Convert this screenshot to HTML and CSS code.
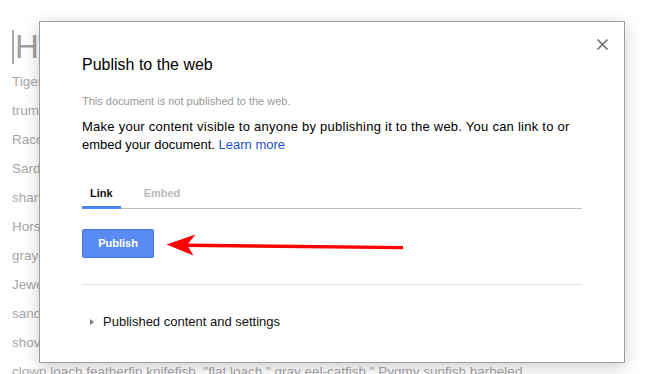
FILE: index.html
```html
<!DOCTYPE html>
<html>
<head>
<meta charset="utf-8">
<link rel="stylesheet" href="styles.css">
</head>
<body>
<div class="doc">
  <div class="doc-title"><span class="cursor"></span>Horse mackerel</div>
  <p>Tiger shark spearfish, horsefish.</p>
  <p>trumpeter cutlassfish pikeperch</p>
  <p>Raccoon butterfly fish yellowtail</p>
  <p>Sardine lightfish tilefish</p>
  <p>shark freshwater eel medaka</p>
  <p>Horsefish Atlantic saury</p>
  <p>gray mullet halibut dory</p>
  <p>Jewel tetra Pacific herring</p>
  <p>sand lance goby dealfish</p>
  <p>shovelnose sturgeon grunion</p>
  <p>clown loach featherfin knifefish, "flat loach," gray eel-catfish," Pygmy sunfish barbeled</p>
</div>

<div class="dialog">
  <button class="close" aria-label="Close">
    <svg width="11" height="11" viewBox="0 0 11 11"><path d="M0.5 0.5 L10.5 10.5 M10.5 0.5 L0.5 10.5" stroke="#767676" stroke-width="1.6" fill="none"/></svg>
  </button>
  <h1 class="title">Publish to the web</h1>
  <div class="status">This document is not published to the web.</div>
  <div class="desc"><span class="wide">Make your content visible to anyone by publishing it to the web. You can link to or</span> embed your document. <a class="link">Learn more</a></div>
  <div class="tabs">
    <div class="tab active">Link</div>
    <div class="tab">Embed</div>
  </div>
  <div class="actions"><button class="publish">Publish</button></div>
  <div class="sep"></div>
  <div class="section"><span class="tri"></span>Published content and settings</div>
</div>

<svg class="arrow" width="654" height="374" viewBox="0 0 654 374">
  <path d="M186 245.2 L403 247.6" stroke="#f00" stroke-width="3.4" fill="none"/>
  <path d="M166.5 244.5 L195.5 234.5 L187 245 L193.5 255.5 Z" fill="#f00"/>
</svg>
</body>
</html>
```

FILE: styles.css
```css
html, body {
  margin: 0;
  padding: 0;
  background: #fff;
  overflow: hidden;
}
body {
  width: 654px;
  height: 374px;
  position: relative;
  font-family: "Liberation Sans", Arial, sans-serif;
}
.doc {
  padding: 29px 0 0 12px;
  color: #a6a6a6;
  white-space: nowrap;
}
.doc-title {
  font-size: 33px;
  line-height: 36px;
  height: 36px;
  margin-bottom: 2px;
  padding-top: 0;
  color: #a0a0a0;
}
.cursor {
  display: inline-block;
  width: 2px;
  height: 34px;
  background: #a8a8a8;
  vertical-align: -6px;
  margin-right: 1px;
}
.doc p {
  margin: 0;
  font-size: 13.5px;
  line-height: 29px;
}
.dialog {
  position: absolute;
  left: 39px;
  top: 21px;
  width: 500px;
  height: 307px;
  border: 1px solid #9c9c9c;
  background: #fff;
  box-shadow: 0 4px 16px rgba(0, 0, 0, 0.2);
  padding: 33px 42px 0;
  box-sizing: content-box;
}
.close {
  position: absolute;
  right: 16px;
  top: 17px;
  width: 11px;
  height: 11px;
  padding: 0;
  border: 0;
  background: none;
  display: block;
}
.close svg { display: block; }
.title {
  margin: 0;
  font-size: 16px;
  line-height: 20px;
  font-weight: normal;
  color: #000;
}
.status {
  margin-top: 19px;
  font-size: 11px;
  line-height: 14px;
  color: #999;
}
.desc {
  margin-top: 10px;
  font-size: 13px;
  line-height: 18px;
  color: #000;
}
.wide {
  letter-spacing: 0.25px;
}
.link {
  color: #2551d1;
  text-decoration: none;
}
.tabs {
  display: flex;
  margin-top: 32px;
  border-bottom: 1px solid #c0c0c0;
}
.tab {
  padding: 0 8px 6px;
  font-size: 11px;
  line-height: 14px;
  font-weight: bold;
  color: #b8b8b8;
  border-bottom: 3px solid transparent;
  margin-bottom: -1px;
  margin-right: 15px;
}
.tab.active {
  color: #111;
  border-bottom-color: #4d86f0;
}
.actions {
  margin-top: 20px;
}
.publish {
  display: block;
  width: 72px;
  height: 29px;
  box-sizing: border-box;
  padding: 0;
  border: 1px solid #4678e0;
  border-radius: 2px;
  background: #5a8bf2;
  color: #fff;
  font-family: "Liberation Sans", Arial, sans-serif;
  font-size: 11px;
  font-weight: bold;
  line-height: 27px;
  text-align: center;
}
.sep {
  margin-top: 26px;
  height: 1px;
  background: #e3e3e3;
}
.section {
  margin-top: 28px;
  font-size: 13px;
  line-height: 18px;
  color: #111;
  display: flex;
  align-items: center;
}
.tri {
  width: 0;
  height: 0;
  border-left: 4px solid #7a7a7a;
  border-top: 3.5px solid transparent;
  border-bottom: 3.5px solid transparent;
  margin-left: 8px;
  margin-right: 9px;
}
.arrow {
  position: absolute;
  left: 0;
  top: 0;
  pointer-events: none;
}
```
